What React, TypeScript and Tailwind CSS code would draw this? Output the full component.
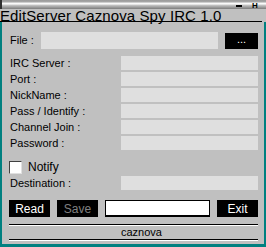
import React from "react";

export default function App() {
  const rows = ["IRC Server :", "Port :", "NickName :", "Pass / Identify :", "Channel Join :", "Password :"];
  return (
    <div className="w-[266px] h-[247px] bg-[#c0c0c0] flex flex-col overflow-hidden font-['Liberation_Sans',Arial,sans-serif] text-black">
      <div className="relative h-[9px] shrink-0 border-l-2 border-[#303030] bg-[linear-gradient(to_bottom,#9a9a9a_0px,#a8a8a8_2px,#f4f4f4_3px,#ffffff_4px,#c8c8c8_5px,#a0a0a0_7px,#7c7c7c_9px)]">
        <div className="absolute left-[234px] top-[5px] w-[6px] h-[2px] bg-black" />
        <div className="absolute left-[250px] top-[2px] text-[8px] leading-[7px] font-bold">H</div>
      </div>
      <div className="relative h-[13px] shrink-0 w-[262px] border-b border-black">
        <div className="absolute left-0 top-0 text-[15px] leading-[14px] tracking-[0.1px] whitespace-nowrap">
          EditServer Caznova Spy IRC 1.0
        </div>
      </div>
      <div className="flex-1 flex flex-col border-l-2 border-r-2 border-b-[3px] border-[#008080] pl-[7px] pr-[6px] text-[11px]">
        <div className="mt-[10px] flex items-center h-[17px]">
          <div className="w-[32px] pl-[1px]">File :</div>
          <div className="w-[177px] h-[17px] bg-[#dfdfdf]" />
          <div className="ml-[7px] w-[33px] h-[16px] bg-black text-white flex items-center justify-center text-[11px] leading-none pb-[3px]">...</div>
        </div>
        <div className="mt-[7px] flex flex-col gap-[2px]">
          {rows.map((r) => (
            <div key={r} className="flex items-center h-[14px]">
              <div className="w-[112px] pl-[1px] leading-[14px]">{r}</div>
              <div className="w-[137px] h-[14px] bg-[#dfdfdf]" />
            </div>
          ))}
        </div>
        <div className="mt-[11px] flex items-center h-[13px]">
          <div className="w-[13px] h-[13px] bg-white border border-t-[#404040] border-l-[#404040] border-r-[#e0e0e0] border-b-[#e0e0e0]" />
          <div className="ml-[6px] text-[12px] leading-[13px]">Notify</div>
        </div>
        <div className="mt-[2px] flex items-center h-[14px]">
          <div className="w-[112px] pl-[1px] leading-[14px]">Destination :</div>
          <div className="w-[137px] h-[14px] bg-[#dfdfdf]" />
        </div>
        <div className="mt-[10px] flex items-center h-[17px]">
          <div className="w-[41px] h-[17px] bg-black text-white flex items-center justify-center text-[12px]">Read</div>
          <div className="ml-[7px] w-[41px] h-[17px] bg-black text-[#808080] flex items-center justify-center text-[12px]">Save</div>
          <div className="ml-[7px] w-[105px] h-[17px] bg-white border border-black border-b-2" />
          <div className="ml-[7px] w-[41px] h-[17px] bg-black text-white flex items-center justify-center text-[12px]">Exit</div>
        </div>
        <div className="mt-[7px] w-[249px] h-[2px] border-t border-black bg-white" />
        <div className="h-[13px] pl-[112px] text-[11px] leading-[13px]">caznova</div>
        <div className="w-[249px] h-[2px] border-t border-black bg-white" />
      </div>
    </div>
  );
}
